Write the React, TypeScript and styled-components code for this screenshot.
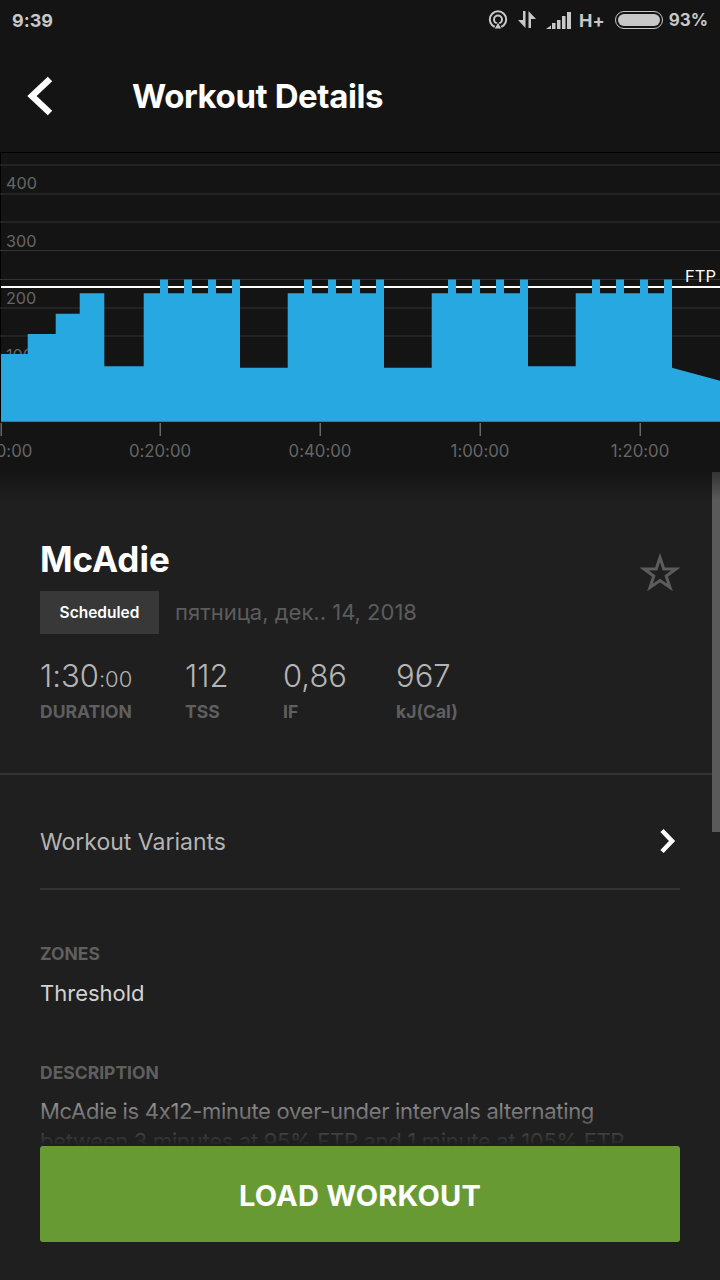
import { FC } from 'react';
import styled, { createGlobalStyle } from 'styled-components';

const INTERVAL_STARTS = [143.7, 287.7, 431.7, 575.7];
const REST_LEVELS = [367.7, 367.7, 366.3];
const HIGH = 279.5;
const LOW = 293.3;
const BASE = 421.7;

// walk the workout blocks and build the outline of the power area (page coords)
const buildArea = () => {
  let d = `M1 ${BASE} V354 H27.7 V334 H55.7 V313.7 H79.7 V${LOW} H104.3 V366.3 H143.7`;
  INTERVAL_STARTS.forEach((start, i) => {
    d += ` V${LOW}`;
    [16.3, 40.3, 64.3, 88.3].forEach((off) => {
      d += ` H${start + off} V${HIGH} H${start + off + 8}`;
      if (off !== 88.3) d += ` V${LOW}`;
    });
    if (i < 3) d += ` V${REST_LEVELS[i]} H${INTERVAL_STARTS[i + 1]}`;
  });
  d += ` V367.7 L720 380.7 V${BASE} Z`;
  return d;
};

const GRID_LINES = [165, 194, 222, 250.5, 279.5, 308, 336];
const TICKS = [
  { x: 1, label: '0:00:00' },
  { x: 160, label: '0:20:00' },
  { x: 320, label: '0:40:00' },
  { x: 480, label: '1:00:00' },
  { x: 640, label: '1:20:00' },
];
const POWER_LABELS = [
  { y: 189, label: '400' },
  { y: 247, label: '300' },
  { y: 304, label: '200' },
  { y: 361, label: '100' },
];

const App: FC = () => {
  return (
    <Root>
      <GlobalStyle />
      <StatusBar>
        <Time>9:39</Time>
        <StatusIcons>
          <svg width="20" height="20" viewBox="0 0 20 20" fill="none" stroke="#c8c8c8">
            <circle cx="10" cy="9.5" r="8.2" strokeWidth="2" />
            <circle cx="10" cy="9.5" r="4" strokeWidth="2" />
            <path d="M6 19 L10 12 L14 19 Z" fill="#c8c8c8" stroke="#141414" strokeWidth="1" />
          </svg>
          <svg width="18" height="18" viewBox="0 0 18 18" fill="#c8c8c8">
            <path d="M0 9 H5 V0 H7.5 V17 Z" />
            <path d="M10.5 17 V0 L18 8 H13 V17 Z" />
          </svg>
          <SignalIcon width="26" height="18" viewBox="0 0 26 18" fill="#c8c8c8">
            <path d="M0 18 L5 14.5 V18 Z" />
            <rect x="6" y="12" width="3.5" height="6" />
            <rect x="11" y="9" width="3.5" height="9" />
            <rect x="16" y="5" width="3.5" height="13" />
            <rect x="21" y="1" width="4" height="17" />
          </SignalIcon>
          <NetworkType>H+</NetworkType>
          <Battery>
            <BatteryFill />
          </Battery>
          <BatteryText>93%</BatteryText>
        </StatusIcons>
      </StatusBar>
      <Header>
        <BackIcon width="26" height="40" viewBox="0 0 26 40" fill="none">
          <path d="M23 3 L5 20 L23 37" stroke="#fff" strokeWidth="6.5" />
        </BackIcon>
        <Title>Workout Details</Title>
      </Header>
      <ChartWrap>
        <svg width="720" height="320" viewBox="0 152 720 320">
          <line x1="0" x2="720" y1="152.5" y2="152.5" stroke="#000" />
          <line x1="0.5" x2="0.5" y1="152" y2="422" stroke="#000" />
          {GRID_LINES.map((y) => (
            <line key={y} x1="0" x2="720" y1={y} y2={y} stroke="#333" strokeWidth="1" />
          ))}
          {POWER_LABELS.map((p) => (
            <PowerText key={p.label} x="6" y={p.y}>
              {p.label}
            </PowerText>
          ))}
          <rect x="1" y="286" width="719" height="2" fill="#fff" />
          <path d={buildArea()} fill="#27a8e0" />
          <FtpText x="685" y="282">
            FTP
          </FtpText>
          {TICKS.map((t) => (
            <g key={t.x}>
              <rect x={t.x - 0.5} y="423" width="1.5" height="13" fill="#666" />
              <TimeText x={t.x} y="457" textAnchor="middle">
                {t.label}
              </TimeText>
            </g>
          ))}
        </svg>
      </ChartWrap>
      <Content>
        <Summary>
          <SummaryTop>
            <div>
              <WorkoutName>McAdie</WorkoutName>
              <ScheduleRow>
                <Badge>Scheduled</Badge>
                <DateText>пятница, дек.. 14, 2018</DateText>
              </ScheduleRow>
            </div>
            <StarIcon width="40" height="40" viewBox="0 0 40 40" fill="none">
              <path
                d="M20 4.5 L23.8 16 H36 L26.2 23 L30 34.5 L20 27.5 L10 34.5 L13.800 23 L4 16 H16.200 Z"
                stroke="#5c5c5c"
                strokeWidth="3"
              />
            </StarIcon>
          </SummaryTop>
          <Stats>
            <Stat $width={145}>
              <StatValue>
                1:30<StatSmall>:00</StatSmall>
              </StatValue>
              <StatLabel>DURATION</StatLabel>
            </Stat>
            <Stat $width={98}>
              <StatValue>112</StatValue>
              <StatLabel>TSS</StatLabel>
            </Stat>
            <Stat $width={113}>
              <StatValue>0,86</StatValue>
              <StatLabel>IF</StatLabel>
            </Stat>
            <Stat>
              <StatValue>967</StatValue>
              <StatLabel>kJ(Cal)</StatLabel>
            </Stat>
          </Stats>
        </Summary>
        <Details>
          <VariantsRow>
            <VariantsText>Workout Variants</VariantsText>
            <VariantsArrow width="18" height="26" viewBox="0 0 18 26" fill="none">
              <path d="M3 2.5 L13 13 L3 23.5" stroke="#fff" strokeWidth="4.5" />
            </VariantsArrow>
          </VariantsRow>
          <SectionLabel $top={52}>ZONES</SectionLabel>
          <SectionText>Threshold</SectionText>
          <SectionLabel $top={53}>DESCRIPTION</SectionLabel>
          <Description>
            McAdie is 4x12-minute over-under intervals alternating between 3 minutes at 95% FTP and 1 minute at 105% FTP
          </Description>
        </Details>
      </Content>
      <ScrollThumb />
      <Footer>
        <LoadButton>LOAD WORKOUT</LoadButton>
      </Footer>
    </Root>
  );
};

export default App;

const GlobalStyle = createGlobalStyle`
  html, body {
    margin: 0;
    padding: 0;
    background: #1f1f1f;
  }
  body {
    font-family: Inter, "Liberation Sans", sans-serif;
    font-feature-settings: "calt" 0;
  }
`;

const Root = styled.div`
  position: relative;
  display: flex;
  flex-direction: column;
  width: 720px;
  height: 1280px;
  overflow: hidden;
  background: #1f1f1f;
`;
const StatusBar = styled.div`
  display: flex;
  justify-content: space-between;
  align-items: center;
  flex: none;
  height: 40px;
  padding: 0 12px;
  background: #141414;
  color: #c8c8c8;
`;
const Time = styled.div`
  font-size: 18px;
  font-weight: 700;
`;
const StatusIcons = styled.div`
  display: flex;
  align-items: center;
  gap: 10px;
`;
const SignalIcon = styled.svg`
  margin-right: -3px;
`;
const NetworkType = styled.div`
  font-size: 18px;
  font-weight: 700;
`;
const Battery = styled.div`
  box-sizing: border-box;
  width: 48px;
  height: 18px;
  padding: 2px;
  border: 1.5px solid #c8c8c8;
  border-radius: 9px;
`;
const BatteryFill = styled.div`
  height: 100%;
  border-radius: 6px;
  background: #c8c8c8;
`;
const BatteryText = styled.div`
  margin-left: -4px;
  font-size: 17px;
  font-weight: 700;
`;
const Header = styled.div`
  display: flex;
  align-items: center;
  flex: none;
  height: 112px;
  padding-left: 27px;
  background: #141414;
`;
const BackIcon = styled.svg`
  margin-right: 79px;
`;
const Title = styled.div`
  color: #fff;
  font-size: 33px;
  font-weight: 700;
  letter-spacing: -0.4px;
`;
const ChartWrap = styled.div`
  flex: none;
  height: 320px;
  background: #141414;
  svg {
    display: block;
  }
`;
const PowerText = styled.text`
  fill: #666;
  font-family: Inter, sans-serif;
  font-size: 16.2px;
`;
const TimeText = styled.text`
  fill: #666;
  font-family: Inter, sans-serif;
  font-size: 16.8px;
`;
const FtpText = styled.text`
  fill: #fff;
  font-family: Inter, sans-serif;
  font-size: 16.5px;
`;
const Content = styled.div`
  flex: 1;
  background: linear-gradient(#141414, #1f1f1f 28px);
`;
const Summary = styled.div`
  height: 303px;
  padding: 0 40px;
  box-sizing: border-box;
  border-bottom: 2px solid #333;
`;
const SummaryTop = styled.div`
  display: flex;
  justify-content: space-between;
  align-items: flex-start;
  padding-top: 66px;
`;
const WorkoutName = styled.div`
  color: #fff;
  font-size: 35px;
  font-weight: 700;
  line-height: 42px;
`;
const ScheduleRow = styled.div`
  display: flex;
  align-items: center;
  gap: 17px;
  margin-top: 11px;
`;
const Badge = styled.div`
  display: flex;
  justify-content: center;
  align-items: center;
  width: 119px;
  height: 43px;
  background: #383838;
  color: #fff;
  font-size: 15.5px;
  font-weight: 600;
`;
const DateText = styled.div`
  margin-bottom: 2px;
  margin-left: -1px;
  color: #5c5c5c;
  font-size: 22px;
`;
const StarIcon = styled.svg`
  margin-top: 15px;
`;
const Stats = styled.div`
  display: flex;
  margin-top: 23px;
`;
const Stat = styled.div<{ $width?: number }>`
  width: ${({ $width }) => ($width ? `${$width}px` : 'auto')};
`;
const StatValue = styled.div`
  color: #b4b4b4;
  font-size: 31px;
  font-weight: 300;
  line-height: 38px;
`;
const StatSmall = styled.span`
  font-size: 22px;
  line-height: 1;
`;
const StatLabel = styled.div`
  margin-top: 5px;
  color: #5f5f5f;
  font-size: 17.5px;
  font-weight: 700;
  line-height: 24px;
`;
const Details = styled.div`
  padding: 0 40px;
`;
const VariantsRow = styled.div`
  display: flex;
  justify-content: space-between;
  align-items: center;
  height: 92px;
  padding: 21px 3px 0 0;
  border-bottom: 2px solid #333;
`;
const VariantsText = styled.div`
  color: #b4b4b4;
  font-size: 23px;
`;
const VariantsArrow = styled.svg`
  margin-bottom: 2px;
`;
const SectionLabel = styled.div<{ $top: number }>`
  margin-top: ${({ $top }) => $top}px;
  color: #5f5f5f;
  font-size: 17.5px;
  font-weight: 700;
  line-height: 24px;
`;
const SectionText = styled.div`
  margin-top: 12px;
  color: #d2d2d2;
  font-size: 22px;
  line-height: 30px;
`;
const Description = styled.div`
  margin-top: 11px;
  color: #b4b4b4;
  font-size: 22px;
  letter-spacing: -0.3px;
  line-height: 30px;
`;
const ScrollThumb = styled.div`
  position: absolute;
  top: 472px;
  right: 0;
  width: 8px;
  height: 360px;
  background: linear-gradient(#333, #5a5a5a 28px);
`;
const Footer = styled.div`
  position: absolute;
  right: 0;
  bottom: 0;
  left: 0;
  padding: 56px 40px 38px;
  background: linear-gradient(rgba(31, 31, 31, 0), #1f1f1f 56px);
`;
const LoadButton = styled.button`
  display: block;
  width: 100%;
  height: 96px;
  padding: 2px 0 0;
  border: none;
  border-radius: 3px;
  background: #679a33;
  color: #fff;
  font-family: Inter, sans-serif;
  font-size: 29px;
  font-weight: 700;
  letter-spacing: 0.2px;
`;
